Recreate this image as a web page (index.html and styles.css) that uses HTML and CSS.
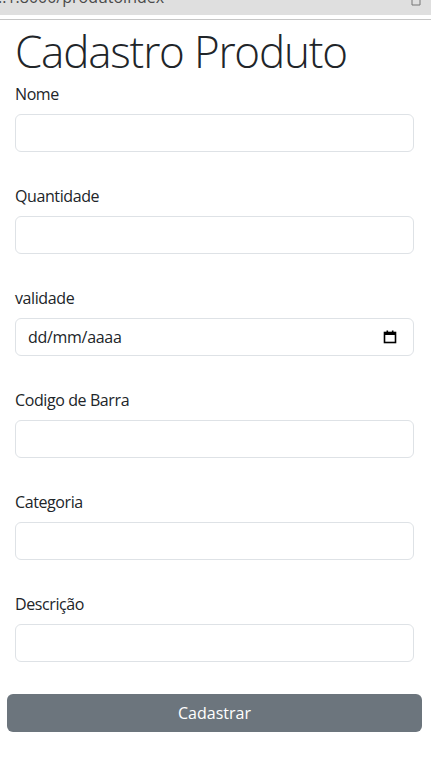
FILE: index.html
```html
<!DOCTYPE html>
<html lang="pt-BR">
<head>
<meta charset="utf-8">
<title>Cadastro Produto</title>
<link rel="stylesheet" href="styles.css">
</head>
<body>
<div class="urlbar">
  <span class="url">..1:8000/produtoindex</span>
  <svg class="url-icon" width="10" height="6" viewBox="0 0 10 6"><path d="M1 0 V5 H9 V0" fill="none" stroke="#777" stroke-width="1"/></svg>
</div>
<div class="urlline"></div>
<main class="container">
  <h1 class="title">Cadastro Produto</h1>
  <form class="form">
    <div class="group">
      <label class="label">Nome</label>
      <div class="input"></div>
    </div>
    <div class="group">
      <label class="label">Quantidade</label>
      <div class="input"></div>
    </div>
    <div class="group">
      <label class="label">validade</label>
      <div class="input date">
        <span class="date-text">dd/mm/aaaa</span>
        <svg class="cal" width="14" height="14" viewBox="0 0 14 14"><rect x="1.5" y="2.5" width="11" height="10" fill="none" stroke="#000" stroke-width="1.6"/><rect x="1" y="2" width="12" height="3" fill="#000"/><rect x="3.5" y="0.5" width="1.6" height="2.5" fill="#000"/><rect x="8.9" y="0.5" width="1.6" height="2.5" fill="#000"/></svg>
      </div>
    </div>
    <div class="group">
      <label class="label">Codigo de Barra</label>
      <div class="input"></div>
    </div>
    <div class="group">
      <label class="label">Categoria</label>
      <div class="input"></div>
    </div>
    <div class="group">
      <label class="label">Descrição</label>
      <div class="input"></div>
    </div>
    <button type="button" class="btn">Cadastrar</button>
  </form>
</main>
</body>
</html>
```
FILE: styles.css
```css
html, body {
  margin: 0;
  padding: 0;
  background: #fff;
}
body {
  font-family: "Open Sans", "Noto Sans", sans-serif;
  color: #212529;
  font-size: 16px;
  line-height: 1.5;
}
.urlbar {
  height: 15px;
  background: #dfdfdf;
  overflow: hidden;
  display: flex;
  justify-content: space-between;
  align-items: flex-start;
}
.url {
  font-family: "Open Sans", sans-serif;
  font-size: 16px;
  line-height: 15px;
  color: #4a4a4a;
  margin-top: -10px;
  margin-left: -2px;
}
.url-icon {
  margin-right: 10px;
}
.urlline {
  height: 1px;
  margin-top: 4px;
  background: #c6c6c6;
}
.container {
  padding: 5px 17px 0 15px;
}
.title {
  margin: 0 0 4px 0;
  font-size: 44px;
  font-weight: 300;
  line-height: 1.2;
  letter-spacing: -1.2px;
}
.form {
  display: flex;
  flex-direction: column;
  gap: 32px;
}
.group {
  display: flex;
  flex-direction: column;
}
.label {
  display: block;
  margin-bottom: 8px;
  line-height: 24px;
  letter-spacing: -0.4px;
}
.input {
  height: 38px;
  box-sizing: border-box;
  border: 1px solid #dee2e6;
  border-radius: 6px;
  background: #fff;
}
.date {
  display: flex;
  align-items: center;
  justify-content: space-between;
  padding: 0 16px 0 12px;
}
.date-text {
  letter-spacing: -0.3px;
}
.cal {
  display: block;
}
.btn {
  margin: 0 -8px;
  height: 38px;
  border: none;
  border-radius: 6px;
  background: #6c757d;
  color: #fff;
  font-family: "Open Sans", "Noto Sans", sans-serif;
  font-size: 16px;
  line-height: 1.5;
  cursor: pointer;
}
```
